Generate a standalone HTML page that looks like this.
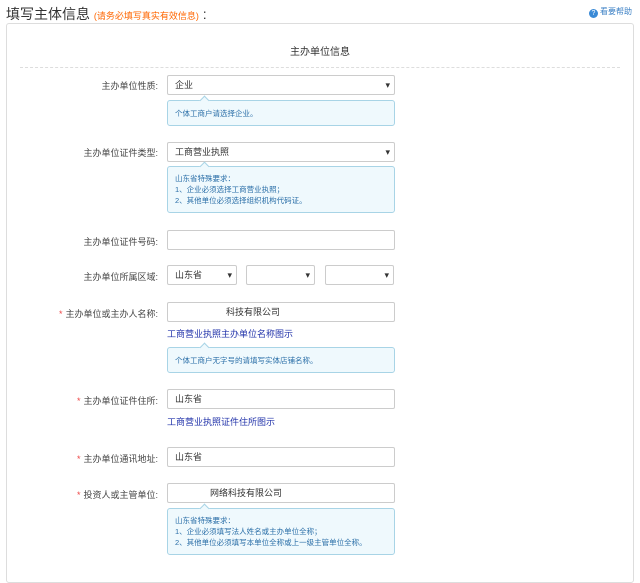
<!DOCTYPE html>
<html><head><meta charset="utf-8"><style>
*{margin:0;padding:0;box-sizing:border-box}
body{width:640px;height:570px;background:#fff;font-family:"Liberation Sans","Noto Sans CJK SC",sans-serif;position:relative;overflow:hidden;color:#333}
.a{position:absolute}
.t{left:6px;top:4px;font-size:14px;color:#333}
.t span{font-size:9px;color:#f60}
.help{right:8px;top:6px;font-size:8px;color:#3a7fc4}
.help i{display:inline-block;width:9px;height:9px;border-radius:50%;background:#3a8ad6;color:#fff;font-style:normal;font-size:7px;text-align:center;line-height:9px;vertical-align:-1px;margin-right:2px}
.panel{left:6px;top:23px;width:628px;height:560px;border:1px solid #ddd;border-radius:3px}
.st{left:0;width:640px;top:43px;text-align:center;font-size:10px;color:#333}
.dash{left:20px;width:600px;top:67px;border-top:1px dashed #ddd}
.lb{width:158px;left:0;text-align:right;font-size:9px;color:#444}
.lb b{color:#e44;font-weight:normal;margin-right:3px}
.in{border:1px solid #ccc;border-radius:2px;height:20px;font-size:9px;line-height:18px;padding-left:7px;color:#333;background:#fff}
.sel:after{content:"▾";position:absolute;right:4px;top:0;font-size:9px;color:#333}
.tip{left:167px;width:228px;border:1px solid #a8d4e6;background:#eff9fd;border-radius:3px;font-size:7.5px;color:#2b6fa8;padding:6px 7px;line-height:11px}
.tip:before{content:"";position:absolute;left:33px;top:-4px;width:6px;height:6px;background:#eff9fd;border-left:1px solid #a8d4e6;border-top:1px solid #a8d4e6;transform:rotate(45deg)}
.lk{left:167px;font-size:9px;color:#2233aa}
</style></head><body>
<div class="a t">填写主体信息 <span>(请务必填写真实有效信息)</span> :</div>
<div class="a help"><i>?</i>看要帮助</div>
<div class="a panel"></div>
<div class="a st">主办单位信息</div>
<div class="a dash"></div>

<div class="a lb" style="top:79px">主办单位性质:</div>
<div class="a in sel" style="left:167px;top:75px;width:228px">企业</div>
<div class="a tip" style="top:100px;height:26px;padding-top:7px">个体工商户请选择企业。</div>

<div class="a lb" style="top:146px">主办单位证件类型:</div>
<div class="a in sel" style="left:167px;top:142px;width:228px">工商营业执照</div>
<div class="a tip" style="top:166px;height:47px">山东省特殊要求：<br>1、企业必须选择工商营业执照；<br>2、其他单位必须选择组织机构代码证。</div>

<div class="a lb" style="top:235px">主办单位证件号码:</div>
<div class="a in" style="left:167px;top:230px;width:228px"></div>

<div class="a lb" style="top:270px">主办单位所属区域:</div>
<div class="a in sel" style="left:167px;top:265px;width:70px">山东省</div>
<div class="a in sel" style="left:246px;top:265px;width:69px"></div>
<div class="a in sel" style="left:325px;top:265px;width:69px"></div>

<div class="a lb" style="top:307px"><b>*</b>主办单位或主办人名称:</div>
<div class="a in" style="left:167px;top:302px;width:228px;padding-left:58px">科技有限公司</div>
<div class="a lk" style="top:327px">工商营业执照主办单位名称图示</div>
<div class="a tip" style="top:347px;height:26px;padding-top:7px">个体工商户无字号的请填写实体店铺名称。</div>

<div class="a lb" style="top:394px"><b>*</b>主办单位证件住所:</div>
<div class="a in" style="left:167px;top:389px;width:228px">山东省</div>
<div class="a lk" style="top:415px">工商营业执照证件住所图示</div>

<div class="a lb" style="top:452px"><b>*</b>主办单位通讯地址:</div>
<div class="a in" style="left:167px;top:447px;width:228px">山东省</div>

<div class="a lb" style="top:488px"><b>*</b>投资人或主管单位:</div>
<div class="a in" style="left:167px;top:483px;width:228px;padding-left:42px">网络科技有限公司</div>
<div class="a tip" style="top:508px;height:47px">山东省特殊要求：<br>1、企业必须填写法人姓名或主办单位全称；<br>2、其他单位必须填写本单位全称或上一级主管单位全称。</div>
</body></html>
